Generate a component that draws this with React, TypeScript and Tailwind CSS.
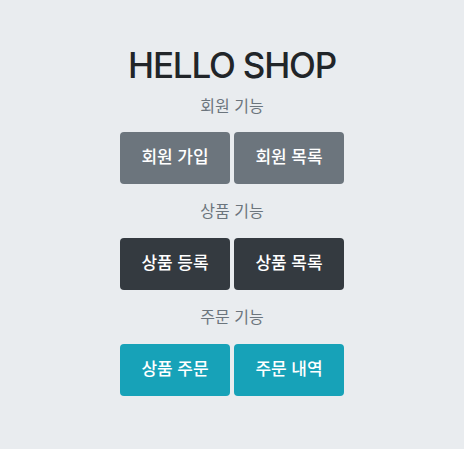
import React from "react";

const font = { fontFamily: 'Inter, "Noto Sans CJK KR", sans-serif' };

function Row({ labels, color }: { labels: string[]; color: string }) {
  return (
    <div className="flex gap-[4px]">
      {labels.map((l) => (
        <button
          key={l}
          className={`w-[110px] h-[52px] rounded-[4px] text-white text-[17px] font-medium ${color}`}
        >
          {l}
        </button>
      ))}
    </div>
  );
}

export default function App() {
  return (
    <div className="w-[464px] h-[449px] bg-[#e9ecef] flex flex-col items-center pt-[44px]" style={font}>
      <h1 className="text-[35px] leading-[42px] font-medium tracking-[-1.2px] text-[#212529]">HELLO SHOP</h1>
      <div className="mt-[8px] text-[16px] leading-[24px] text-[#6c757d]">회원 기능</div>
      <div className="mt-[14px]"><Row labels={["회원 가입", "회원 목록"]} color="bg-[#6c757d]" /></div>
      <div className="mt-[15px] text-[16px] leading-[24px] text-[#6c757d]">상품 기능</div>
      <div className="mt-[15px]"><Row labels={["상품 등록", "상품 목록"]} color="bg-[#343a40]" /></div>
      <div className="mt-[15px] text-[16px] leading-[24px] text-[#6c757d]">주문 기능</div>
      <div className="mt-[15px]"><Row labels={["상품 주문", "주문 내역"]} color="bg-[#17a2b8]" /></div>
    </div>
  );
}
